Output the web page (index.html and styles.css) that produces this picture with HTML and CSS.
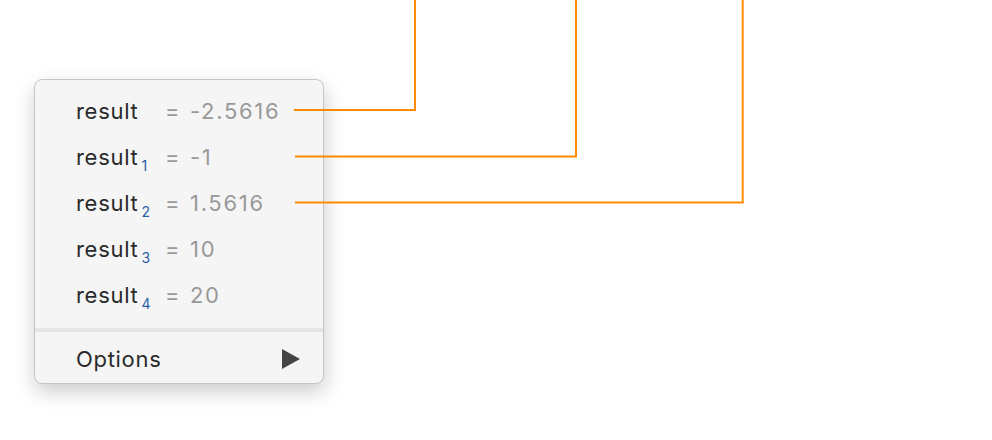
FILE: index.html
```html
<!DOCTYPE html>
<html>
<head>
<meta charset="utf-8">
<link rel="stylesheet" href="styles.css">
</head>
<body>
<div class="stage">
  <div class="menu">
    <div class="rows">
      <div class="row"><span class="name">result</span><span class="eq">=</span><span class="val">-2.5616</span></div>
      <div class="row"><span class="name">result<sub>1</sub></span><span class="eq">=</span><span class="val">-1</span></div>
      <div class="row"><span class="name">result<sub>2</sub></span><span class="eq">=</span><span class="val">1.5616</span></div>
      <div class="row"><span class="name">result<sub>3</sub></span><span class="eq">=</span><span class="val">10</span></div>
      <div class="row"><span class="name">result<sub>4</sub></span><span class="eq">=</span><span class="val">20</span></div>
    </div>
    <div class="sep"></div>
    <div class="options"><span>Options</span><span class="tri"></span></div>
  </div>
  <svg class="wires" width="992" height="440" viewBox="0 0 992 440">
    <polyline points="294,110 415,110 415,0" />
    <polyline points="295,156.5 576,156.5 576,0" />
    <polyline points="295,202.5 742.7,202.5 742.7,0" />
  </svg>
</div>
</body>
</html>
```
FILE: styles.css
```css
html, body {
  margin: 0;
  padding: 0;
  background: #ffffff;
}
.stage {
  position: relative;
  width: 992px;
  height: 440px;
  overflow: hidden;
  padding-top: 79px;
  padding-left: 34px;
  box-sizing: border-box;
  font-family: Inter, "Open Sans", sans-serif;
}
.menu {
  width: 290px;
  height: 305px;
  box-sizing: border-box;
  background: #f5f5f5;
  border: 1px solid #c6c6c6;
  border-radius: 8px;
  box-shadow: 1px 8px 20px rgba(0, 0, 0, 0.2);
  display: flex;
  flex-direction: column;
  padding-top: 8px;
}
.rows {
  display: flex;
  flex-direction: column;
}
.row {
  height: 46px;
  display: grid;
  grid-template-columns: 76px 12px auto;
  column-gap: 13px;
  align-items: center;
  padding-left: 41px;
  font-size: 22px;
  letter-spacing: 0.7px;
}
.name {
  color: #2a2a2a;
}
.name sub {
  font-size: 14px;
  letter-spacing: 0;
  color: #2b5fa8;
  vertical-align: -6px;
  line-height: 0;
  margin-left: 3px;
}
.eq {
  color: #9b9b9b;
}
.val {
  color: #999999;
  letter-spacing: 1.7px;
}
.sep {
  margin-top: 10px;
  height: 4px;
  background: #e5e5e5;
}
.options {
  flex: 1;
  display: flex;
  align-items: center;
  justify-content: space-between;
  padding-top: 3px;
  padding-left: 41px;
  padding-right: 23px;
  font-size: 22px;
  letter-spacing: 0.7px;
  color: #2a2a2a;
}
.tri {
  width: 0;
  height: 0;
  border-top: 10px solid transparent;
  border-bottom: 10px solid transparent;
  border-left: 18px solid #444444;
}
.wires {
  position: absolute;
  left: 0;
  top: 0;
}
.wires polyline {
  fill: none;
  stroke: #ff8c00;
  stroke-width: 2;
}
```
